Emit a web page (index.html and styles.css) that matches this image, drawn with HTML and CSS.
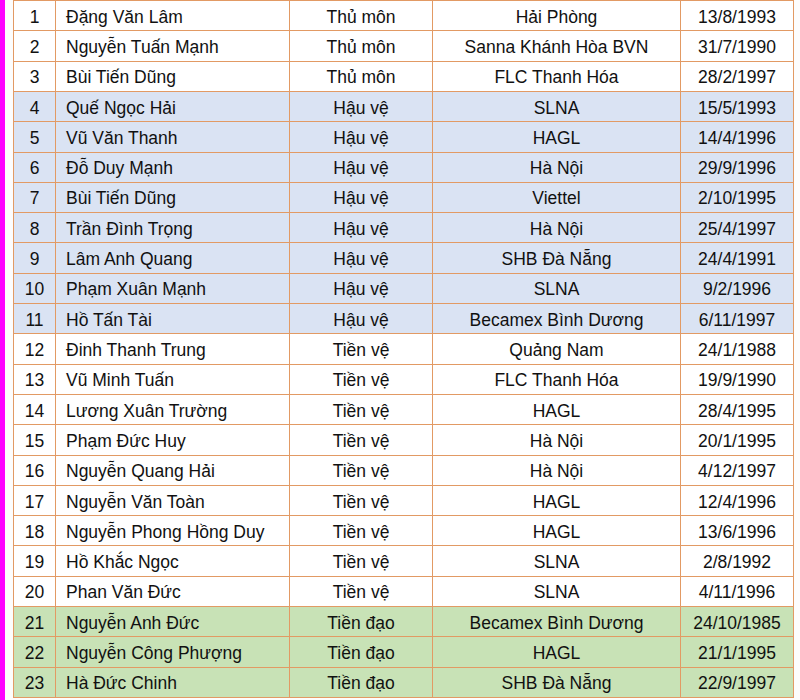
FILE: index.html
```html
<!DOCTYPE html>
<html lang="vi">
<head>
<meta charset="utf-8">
<title>Danh sách cầu thủ</title>
<link rel="stylesheet" href="styles.css">
</head>
<body>
<div class="page">
  <div class="stripe"></div>
  <div class="roster">
    <div class="row gk"><div class="c num">1</div><div class="c name">Đặng Văn Lâm</div><div class="c">Thủ môn</div><div class="c">Hải Phòng</div><div class="c">13/8/1993</div></div>
    <div class="row gk"><div class="c num">2</div><div class="c name">Nguyễn Tuấn Mạnh</div><div class="c">Thủ môn</div><div class="c">Sanna Khánh Hòa BVN</div><div class="c">31/7/1990</div></div>
    <div class="row gk"><div class="c num">3</div><div class="c name">Bùi Tiến Dũng</div><div class="c">Thủ môn</div><div class="c">FLC Thanh Hóa</div><div class="c">28/2/1997</div></div>
    <div class="row df"><div class="c num">4</div><div class="c name">Quế Ngọc Hải</div><div class="c">Hậu vệ</div><div class="c">SLNA</div><div class="c">15/5/1993</div></div>
    <div class="row df"><div class="c num">5</div><div class="c name">Vũ Văn Thanh</div><div class="c">Hậu vệ</div><div class="c">HAGL</div><div class="c">14/4/1996</div></div>
    <div class="row df"><div class="c num">6</div><div class="c name">Đỗ Duy Mạnh</div><div class="c">Hậu vệ</div><div class="c">Hà Nội</div><div class="c">29/9/1996</div></div>
    <div class="row df"><div class="c num">7</div><div class="c name">Bùi Tiến Dũng</div><div class="c">Hậu vệ</div><div class="c">Viettel</div><div class="c">2/10/1995</div></div>
    <div class="row df"><div class="c num">8</div><div class="c name">Trần Đình Trọng</div><div class="c">Hậu vệ</div><div class="c">Hà Nội</div><div class="c">25/4/1997</div></div>
    <div class="row df"><div class="c num">9</div><div class="c name">Lâm Anh Quang</div><div class="c">Hậu vệ</div><div class="c">SHB Đà Nẵng</div><div class="c">24/4/1991</div></div>
    <div class="row df"><div class="c num">10</div><div class="c name">Phạm Xuân Mạnh</div><div class="c">Hậu vệ</div><div class="c">SLNA</div><div class="c">9/2/1996</div></div>
    <div class="row df"><div class="c num">11</div><div class="c name">Hồ Tấn Tài</div><div class="c">Hậu vệ</div><div class="c">Becamex Bình Dương</div><div class="c">6/11/1997</div></div>
    <div class="row mf"><div class="c num">12</div><div class="c name">Đinh Thanh Trung</div><div class="c">Tiền vệ</div><div class="c">Quảng Nam</div><div class="c">24/1/1988</div></div>
    <div class="row mf"><div class="c num">13</div><div class="c name">Vũ Minh Tuấn</div><div class="c">Tiền vệ</div><div class="c">FLC Thanh Hóa</div><div class="c">19/9/1990</div></div>
    <div class="row mf"><div class="c num">14</div><div class="c name">Lương Xuân Trường</div><div class="c">Tiền vệ</div><div class="c">HAGL</div><div class="c">28/4/1995</div></div>
    <div class="row mf"><div class="c num">15</div><div class="c name">Phạm Đức Huy</div><div class="c">Tiền vệ</div><div class="c">Hà Nội</div><div class="c">20/1/1995</div></div>
    <div class="row mf"><div class="c num">16</div><div class="c name">Nguyễn Quang Hải</div><div class="c">Tiền vệ</div><div class="c">Hà Nội</div><div class="c">4/12/1997</div></div>
    <div class="row mf"><div class="c num">17</div><div class="c name">Nguyễn Văn Toàn</div><div class="c">Tiền vệ</div><div class="c">HAGL</div><div class="c">12/4/1996</div></div>
    <div class="row mf"><div class="c num">18</div><div class="c name">Nguyễn Phong Hồng Duy</div><div class="c">Tiền vệ</div><div class="c">HAGL</div><div class="c">13/6/1996</div></div>
    <div class="row mf"><div class="c num">19</div><div class="c name">Hồ Khắc Ngọc</div><div class="c">Tiền vệ</div><div class="c">SLNA</div><div class="c">2/8/1992</div></div>
    <div class="row mf"><div class="c num">20</div><div class="c name">Phan Văn Đức</div><div class="c">Tiền vệ</div><div class="c">SLNA</div><div class="c">4/11/1996</div></div>
    <div class="row fw"><div class="c num">21</div><div class="c name">Nguyễn Anh Đức</div><div class="c">Tiền đạo</div><div class="c">Becamex Bình Dương</div><div class="c">24/10/1985</div></div>
    <div class="row fw"><div class="c num">22</div><div class="c name">Nguyễn Công Phượng</div><div class="c">Tiền đạo</div><div class="c">HAGL</div><div class="c">21/1/1995</div></div>
    <div class="row fw"><div class="c num">23</div><div class="c name">Hà Đức Chinh</div><div class="c">Tiền đạo</div><div class="c">SHB Đà Nẵng</div><div class="c">22/9/1997</div></div>
  </div>
</div>
</body>
</html>
```

FILE: styles.css
```css
html, body {
  margin: 0;
  padding: 0;
  background: #ffffff;
}

.page {
  display: flex;
  align-items: flex-start;
  height: 700px;
  background: #fdfdfd;
}

.stripe {
  width: 5px;
  height: 700px;
  background: #ff00ff;
  margin-right: 8px;
}

.roster {
  width: 779px;
  height: 696px;
  padding: 1px;
  background: #e29a64;
  display: grid;
  grid-template-rows: repeat(23, 1fr);
  row-gap: 1px;
  font-family: "Liberation Sans", Arial, sans-serif;
  font-size: 17.5px;
  color: #111111;
}

.row {
  display: grid;
  grid-template-columns: 41px 233px 142px 247px 112px;
  column-gap: 1px;
}

.c {
  display: flex;
  align-items: center;
  justify-content: center;
  padding-top: 3px;
  white-space: nowrap;
  overflow: hidden;
}

.name {
  justify-content: flex-start;
  padding-left: 10px;
}

.gk .c, .mf .c {
  background: #ffffff;
}

.df .c {
  background: #dae3f3;
}

.fw .c {
  background: #c8e2b6;
}
```
